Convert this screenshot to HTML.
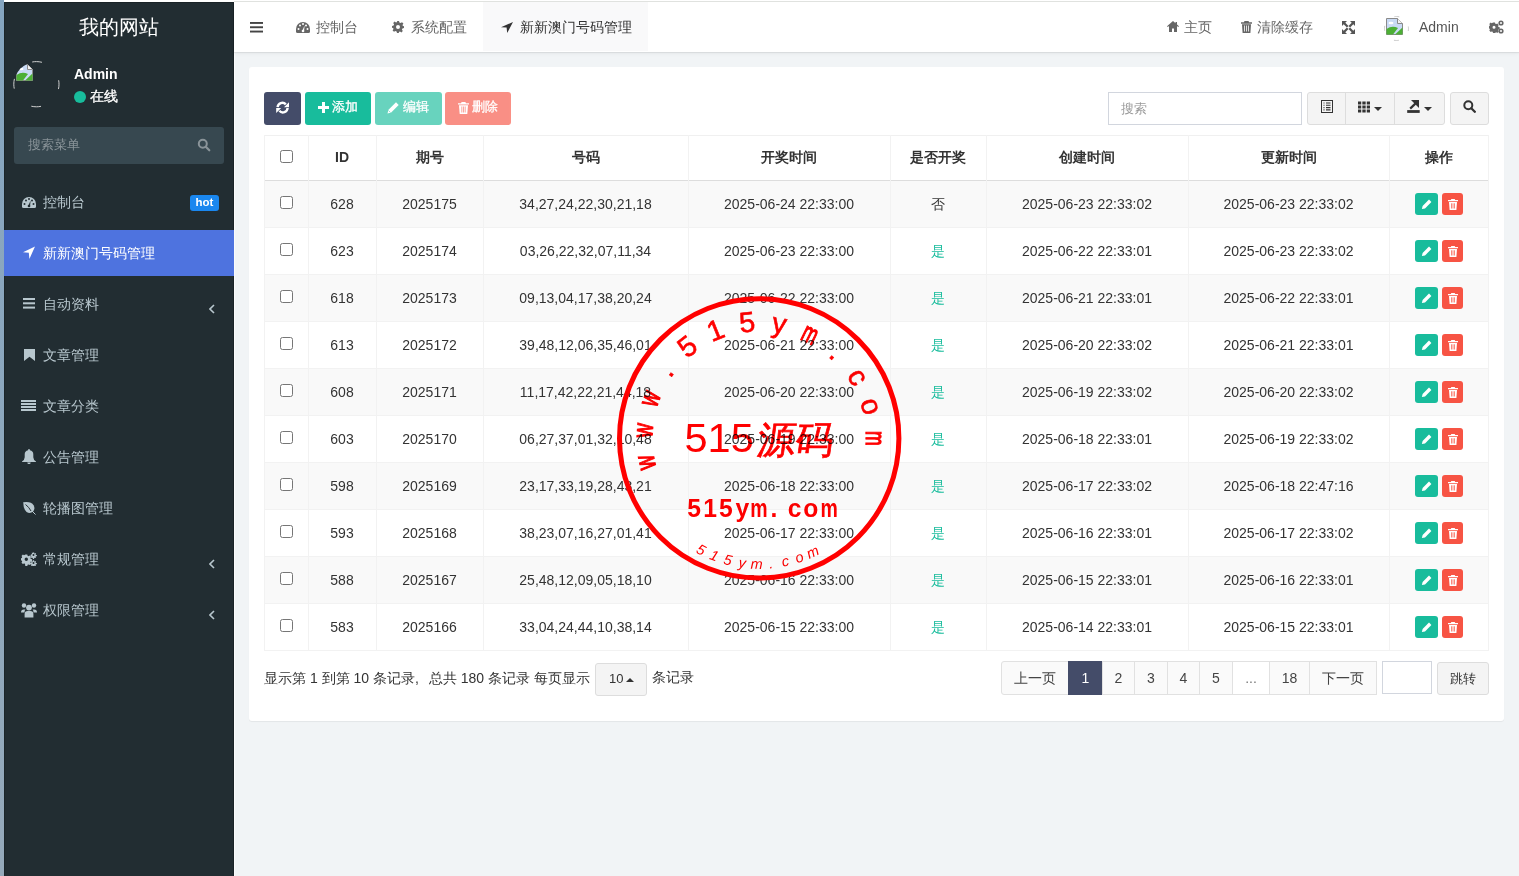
<!DOCTYPE html>
<html><head><meta charset="utf-8">
<style>
*{box-sizing:border-box;margin:0;padding:0}
html,body{width:1519px;height:876px;overflow:hidden;background:#f1f4f6;font-family:"Liberation Sans",sans-serif;font-size:14px;color:#333}
.abs{position:absolute}
#strip{position:absolute;left:0;top:0;width:4px;height:876px;background:linear-gradient(#85a5c0,#95a9ba)}
#topline{position:absolute;left:4px;top:0;width:1515px;height:2px;background:#fff}
#side{position:absolute;left:4px;top:2px;width:230px;height:874px;background:#222d32;color:#b8c7ce}
#logo{position:absolute;left:0;top:0;width:230px;height:50px;line-height:50px;text-align:center;color:#fff;font-size:20px}
.mi{position:absolute;left:0;width:230px;height:46px;line-height:46px;font-size:14px;color:#b8c7ce}
.mi .ic{position:absolute;left:18px;top:16px;width:14px;height:14px}
.mi .tx{position:absolute;left:39px;top:0}
.mi.active{background:#4e73df;color:#fff}
.mi .arr{position:absolute;left:204px;top:19px;width:8px;height:10px}
#hdr{position:absolute;left:234px;top:2px;width:1285px;height:50px;background:#fff;box-shadow:0 1px 1px rgba(0,0,0,.07),0 2px 4px rgba(0,0,0,.04)}
#panel{position:absolute;left:249px;top:67px;width:1255px;height:654px;background:#fff;border-radius:3px;box-shadow:0 1px 1px rgba(0,0,0,.06)}
.cell{height:20px;line-height:20px;text-align:center;font-size:14px;color:#333;white-space:nowrap}
.cbx{width:13px;height:13px;border:1px solid #767676;border-radius:2.5px;background:#fff}
.btn-xs{height:22px;border-radius:3px}
.tb{position:absolute;top:25px;height:33px;border-radius:3px;color:#fff;font-size:13px;line-height:30px;-webkit-text-stroke:.3px #fff}
.pg{position:absolute;top:594px;height:34px;border:1px solid #e1e1e1;background:#fafafa;color:#444;font-size:14px;line-height:32px;text-align:center}
</style></head>
<body>
<div id="strip"></div>
<div id="topline"></div>
<div class="abs" style="left:234px;top:52px;width:1px;height:824px;background:#fafbfc"></div>
<div id="side">
  <div id="logo">我的网站</div>
  <div class="abs" style="left:0;top:0;width:1px;height:874px;background:#1b2529"></div><div class="abs" style="left:229px;top:0;width:1px;height:874px;background:#1a2327"></div><div class="abs" style="left:0;top:0;width:230px;height:1px;background:#1a2327"></div>
  <!-- user panel -->
  <svg class="abs" style="left:9px;top:59px" width="47" height="47" viewBox="0 0 47 47"><circle cx="23.4" cy="23.2" r="22.6" fill="none" stroke="#d0d0d0" stroke-width="1" stroke-dasharray="10 25.5" stroke-dashoffset="5"/></svg>
  <div class="abs" style="left:10px;top:60px;width:45px;height:45px;border-radius:50%;overflow:hidden"><svg style="position:absolute;left:2px;top:2px" width="17" height="17" viewBox="0 0 17 17"><path d="M.5 .5h11l5 5v11H.5z" fill="#c9daf5" stroke="#8a8a8a" stroke-width="1"/><path d="M.5 16.5V11Q6 7 12 10L7 16.5z" fill="#4caf35"/><path d="M9 16.5L16.5 9.5v7z" fill="#4caf35"/><path d="M11.5 .5v5h5" fill="#f2f2f2" stroke="#8a8a8a" stroke-width="1"/><ellipse cx="5" cy="5" rx="2.5" ry="1.3" fill="#fff"/></svg></div>
  <div class="abs" style="left:70px;top:63px;color:#fff;font-weight:bold;font-size:14px;line-height:18px">Admin</div>
  <div class="abs" style="left:70px;top:89px;width:12px;height:12px;border-radius:50%;background:#18bc9c"></div>
  <div class="abs" style="left:86px;top:85px;color:#fff;font-size:14px;line-height:18px;-webkit-text-stroke:.3px #fff">在线</div>
  <!-- search -->
  <div class="abs" style="left:10px;top:125px;width:210px;height:37px;background:#374850;border-radius:3px"></div>
  <div class="abs" style="left:24px;top:134px;color:#8a9499;font-size:13px;line-height:18px">搜索菜单</div>
  <svg class="abs" style="left:193px;top:136px" width="14" height="14" viewBox="0 0 14 14"><circle cx="5.8" cy="5.8" r="4" fill="none" stroke="#8a9499" stroke-width="2"/><path d="M8.8 8.8l3.5 3.5" stroke="#8a9499" stroke-width="2.2" stroke-linecap="round"/></svg>
  <!-- menu -->
  <div class="mi" style="top:177px"><svg class="abs" style="left:18px;top:18px" width="14" height="11" viewBox="0 0 14 11"><path d="M7 0A7 7 0 0 0 0 7v2.5q0 1.5 1.5 1.5h11q1.5 0 1.5-1.5V7A7 7 0 0 0 7 0z" fill="#b8c7ce"/><circle cx="2.5" cy="7" r="1" fill="#222d32"/><circle cx="4" cy="3.5" r="1" fill="#222d32"/><circle cx="7" cy="2" r="1" fill="#222d32"/><circle cx="11.5" cy="7" r="1" fill="#222d32"/><circle cx="10" cy="3.5" r="1" fill="#222d32"/><path d="M6 9.5L8.6 3.5L8 9.5z" fill="#222d32"/><circle cx="7" cy="9" r="1.3" fill="#222d32"/></svg><span class="tx">控制台</span>
    <div class="abs" style="left:186px;top:16px;width:29px;height:16px;background:#1a87ef;border-radius:3px;color:#fff;font-weight:bold;font-size:11.5px;line-height:14px;text-align:center">hot</div></div>
  <div class="mi active" style="top:228px"><svg class="abs" style="left:19px;top:16px" width="12" height="13" viewBox="0 0 12 13"><path d="M12 0.5L0 6.3l5.8.5L6.4 13z" fill="#fff"/></svg><span class="tx">新新澳门号码管理</span></div>
  <div class="mi" style="top:279px"><svg class="abs" style="left:19px;top:17px" width="12" height="11" viewBox="0 0 12 11"><rect y="0" width="12" height="2" fill="#b8c7ce"/><rect y="4.3" width="12" height="2" fill="#b8c7ce"/><rect y="8.6" width="12" height="2" fill="#b8c7ce"/></svg><svg class="abs" style="left:205px;top:23px" width="6" height="10" viewBox="0 0 6 10"><path d="M5 1L1 5l4 4" fill="none" stroke="#b8c7ce" stroke-width="1.6"/></svg><span class="tx">自动资料</span></div>
  <div class="mi" style="top:330px"><svg class="abs" style="left:20px;top:17px" width="11" height="12" viewBox="0 0 11 12"><path d="M0 0h11v12L5.5 7.8 0 12z" fill="#b8c7ce"/></svg><span class="tx">文章管理</span></div>
  <div class="mi" style="top:381px"><svg class="abs" style="left:17px;top:17px" width="15" height="11" viewBox="0 0 15 11"><rect y="0" width="15" height="2" fill="#b8c7ce"/><rect y="3" width="15" height="2" fill="#b8c7ce"/><rect y="6" width="15" height="2" fill="#b8c7ce"/><rect y="9" width="15" height="2" fill="#b8c7ce"/></svg><span class="tx">文章分类</span></div>
  <div class="mi" style="top:432px"><svg class="abs" style="left:18px;top:15px" width="14" height="15" viewBox="0 0 14 15"><path d="M7 0q.9 0 .9.9v.4A4.2 4.2 0 0 1 11.3 5.5v2.8q0 2.4 2.7 4.3v.5H0v-.5q2.7-1.9 2.7-4.3V5.5A4.2 4.2 0 0 1 6.1 1.3V.9Q6.1 0 7 0z" fill="#b8c7ce"/><path d="M5.3 13.4h3.4a1.7 1.7 0 0 1-3.4 0z" fill="#b8c7ce"/></svg><span class="tx">公告管理</span></div>
  <div class="mi" style="top:483px"><svg class="abs" style="left:18px;top:16px" width="14" height="14" viewBox="0 0 14 14"><path d="M1.2 1.2Q9 0 11.6 4.2q1.8 3.2-.4 6.3Q8 13.2 4.6 11 1.5 8.6 1.2 1.2z" fill="#b8c7ce"/><path d="M2.5 2.5L13.5 13.5" stroke="#b8c7ce" stroke-width="1"/><path d="M3.5 3.5Q7 6 9 10" stroke="#222d32" stroke-width="1" fill="none"/></svg><span class="tx">轮播图管理</span></div>
  <div class="mi" style="top:534px"><svg class="abs" style="left:17px;top:16px" width="16" height="14" viewBox="0 0 16 14"><g fill="#b8c7ce"><path fill-rule="evenodd" d="M4.3 2.5h2l.3 1.3 1 .4 1.1-.7 1.4 1.4-.7 1.1.4 1 1.3.3v2l-1.3.3-.4 1 .7 1.1-1.4 1.4-1.1-.7-1 .4-.3 1.3h-2L4 11.8l-1-.4-1.1.7L.5 10.7l.7-1.1-.4-1L-.5 8.3v-2l1.3-.3.4-1-.7-1.1L1.9 2.5l1.1.7 1-.4zM5.3 5.6a1.7 1.7 0 1 0 0 3.4 1.7 1.7 0 1 0 0-3.4z"/><path fill-rule="evenodd" d="M12.5.2l.6.1.1.9.6.3.8-.4.4.4-.4.8.3.6.9.1.1.6-.1.6-.9.1-.3.6.4.8-.4.4-.8-.4-.6.3-.1.9-.6.1-.6-.1-.1-.9-.6-.3-.8.4-.4-.4.4-.8-.3-.6-.9-.1L9.8 3l.1-.6.9-.1.3-.6-.4-.8.4-.4.8.4.6-.3.1-.9zM12.5 2a1 1 0 1 0 0 2 1 1 0 1 0 0-2z"/><path fill-rule="evenodd" d="M12.5 8.2l.6.1.1.9.6.3.8-.4.4.4-.4.8.3.6.9.1.1.6-.1.6-.9.1-.3.6.4.8-.4.4-.8-.4-.6.3-.1.9-.6.1-.6-.1-.1-.9-.6-.3-.8.4-.4-.4.4-.8-.3-.6-.9-.1-.1-.6.1-.6.9-.1.3-.6-.4-.8.4-.4.8.4.6-.3.1-.9zM12.5 10a1 1 0 1 0 0 2 1 1 0 1 0 0-2z"/></g></svg><svg class="abs" style="left:205px;top:23px" width="6" height="10" viewBox="0 0 6 10"><path d="M5 1L1 5l4 4" fill="none" stroke="#b8c7ce" stroke-width="1.6"/></svg><span class="tx">常规管理</span></div>
  <div class="mi" style="top:585px"><svg class="abs" style="left:17px;top:16px" width="16" height="15" viewBox="0 0 16 15"><g fill="#b8c7ce"><circle cx="3" cy="2.5" r="2.2"/><circle cx="13" cy="2.5" r="2.2"/><circle cx="8" cy="4.6" r="2.9"/><path d="M0 9.5q0-3 2.8-3h1.6q-.9 1.2-.9 3H0z"/><path d="M16 9.5q0-3-2.8-3h-1.6q.9 1.2.9 3H16z"/><path d="M3.6 14.5V11q0-3 3-3h2.8q3 0 3 3v3.5z"/></g></svg><svg class="abs" style="left:205px;top:23px" width="6" height="10" viewBox="0 0 6 10"><path d="M5 1L1 5l4 4" fill="none" stroke="#b8c7ce" stroke-width="1.6"/></svg><span class="tx">权限管理</span></div>
</div>
<div id="hdr">
  <div class="abs" style="left:0;top:-1px;width:1285px;height:1px;background:#e0e2df"></div>
  <svg class="abs" style="left:16px;top:20px" width="13" height="11" viewBox="0 0 13 11"><rect x="0" y="0" width="13" height="1.9" fill="#444"/><rect x="0" y="4.3" width="13" height="1.9" fill="#444"/><rect x="0" y="8.6" width="13" height="1.9" fill="#444"/></svg>
  <!-- tab dashboard -->
  <svg class="abs" style="left:62px;top:20px" width="14" height="11" viewBox="0 0 14 11"><path d="M7 0A7 7 0 0 0 0 7v2.5q0 1.5 1.5 1.5h11q1.5 0 1.5-1.5V7A7 7 0 0 0 7 0z" fill="#666"/><circle cx="2.5" cy="7" r="1" fill="#fff"/><circle cx="4" cy="3.5" r="1" fill="#fff"/><circle cx="7" cy="2" r="1" fill="#fff"/><circle cx="11.5" cy="7" r="1" fill="#fff"/><circle cx="10" cy="3.5" r="1" fill="#fff"/><path d="M6 9.5L8.6 3.5L8 9.5z" fill="#fff"/><circle cx="7" cy="9" r="1.3" fill="#fff"/></svg>
  <div class="abs" style="left:82px;top:17px;color:#666;font-size:14px;line-height:16px">控制台</div>
  <svg class="abs" style="left:158px;top:19px" width="12" height="12" viewBox="0 0 12 12"><path fill="#666" fill-rule="evenodd" d="M5 0h2l.4 1.6 1.2.5 1.4-.9 1.4 1.4-.9 1.4.5 1.2L12 5v2l-1.6.4-.5 1.2.9 1.4-1.4 1.4-1.4-.9-1.2.5L7 12H5l-.4-1.6-1.2-.5-1.4.9-1.4-1.4.9-1.4-.5-1.2L0 7V5l1.6-.4.5-1.2-.9-1.4 1.4-1.4 1.4.9 1.2-.5zM6 4a2 2 0 1 0 0 4a2 2 0 1 0 0-4z"/></svg>
  <div class="abs" style="left:177px;top:17px;color:#666;font-size:14px;line-height:16px">系统配置</div>
  <div class="abs" style="left:249px;top:0;width:165px;height:49px;background:#f9f9fa"></div>
  <svg class="abs" style="left:267px;top:20px" width="12" height="11" viewBox="0 0 12 11"><path d="M12 0L0 5.2l5.6.4L6.2 11z" fill="#333"/></svg>
  <div class="abs" style="left:286px;top:17px;color:#333;font-size:14px;line-height:16px">新新澳门号码管理</div>
  <!-- right -->
  <svg class="abs" style="left:933px;top:19px" width="12" height="11" viewBox="0 0 12 11"><path d="M6 0L0 5.3l.8.8L2 5v6h3V7.5h2V11h3V5l1.2 1.1.8-.8L10 3.5V1H8.5v1.2z" fill="#666"/></svg>
  <div class="abs" style="left:950px;top:17px;color:#666;font-size:14px;line-height:16px">主页</div>
  <svg class="abs" style="left:1007px;top:19px" width="11" height="12" viewBox="0 0 11 12"><path d="M3.5 0h4l.6 1.3H11v1.4H0V1.3h2.9zM1 3.3h9l-.6 8.7H1.6z" fill="#666"/><path d="M3.5 4.5v6M5.5 4.5v6M7.5 4.5v6" stroke="#fff" stroke-width=".8"/></svg>
  <div class="abs" style="left:1023px;top:17px;color:#666;font-size:14px;line-height:16px">清除缓存</div>
  <svg class="abs" style="left:1108px;top:19px" width="13" height="13" viewBox="0 0 13 13"><path d="M0 0h5L3.3 1.7 6.5 4.9 4.9 6.5 1.7 3.3 0 5zM13 0v5l-1.7-1.7L8.1 6.5 6.5 4.9 9.7 1.7 8 0zM0 13V8l1.7 1.7 3.2-3.2 1.6 1.6-3.2 3.2L5 13zM13 13H8l1.7-1.7-3.2-3.2 1.6-1.6 3.2 3.2L13 8z" fill="#555"/></svg>
  <svg class="abs" style="left:1150px;top:14px" width="26" height="26" viewBox="0 0 26 26"><circle cx="12.5" cy="12.5" r="12" fill="none" stroke="#c8c8c8" stroke-width="1" stroke-dasharray="5 13.85" stroke-dashoffset="2.5"/></svg>
  <svg class="abs" style="left:1152px;top:16px" width="17" height="17" viewBox="0 0 17 17"><path d="M.5 .5h11l5 5v11H.5z" fill="#c9daf5" stroke="#8a8a8a" stroke-width="1"/><path d="M.5 16.5V11Q6 7 12 10L7 16.5z" fill="#4caf35"/><path d="M9 16.5L16.5 9.5v7z" fill="#4caf35"/><path d="M11.5 .5v5h5" fill="#f2f2f2" stroke="#8a8a8a" stroke-width="1"/><ellipse cx="5" cy="5" rx="2.5" ry="1.3" fill="#fff"/></svg>
  <div class="abs" style="left:1185px;top:17px;color:#555;font-size:14px;line-height:16px">Admin</div>
  <svg class="abs" style="left:1255px;top:18px" width="15" height="14" viewBox="0 0 15 14"><path fill="#666" fill-rule="evenodd" d="M4 2.5h2l.3 1.2 1 .4 1-.6 1.4 1.4-.6 1 .4 1 1.2.3v2l-1.2.3-.4 1 .6 1-1.4 1.4-1-.6-1 .4L6 13H4l-.3-1.2-1-.4-1 .6L.3 10.6l.6-1-.4-1L-.7 8.3v-2l1.2-.3.4-1-.6-1L1.7 2.6l1 .6 1-.4zM5 5.8a1.5 1.5 0 1 0 0 3a1.5 1.5 0 1 0 0-3z"/><circle cx="12" cy="3" r="2.6" fill="#666"/><circle cx="12" cy="3" r="1" fill="#fff"/><circle cx="12" cy="11" r="2.6" fill="#666"/><circle cx="12" cy="11" r="1" fill="#fff"/></svg>
</div>
<div id="panel">
<div class="tb" style="left:15px;width:37px;background:#444c69">
 <svg width="14" height="13" viewBox="0 0 14 13" style="position:absolute;left:11.5px;top:9px"><path d="M1.6 6.2A4.7 4.7 0 0 1 9.8 3.4" fill="none" stroke="#fff" stroke-width="2.4"/><path d="M13 1.2V6.2H8z" fill="#fff"/><path d="M11.6 7A4.7 4.7 0 0 1 3.4 9.8" fill="none" stroke="#fff" stroke-width="2.4"/><path d="M.2 12V7h5z" fill="#fff"/></svg>
</div>
<div class="tb" style="left:56px;width:66px;background:#18bc9c">
 <svg width="11" height="11" viewBox="0 0 11 11" style="position:absolute;left:13px;top:10px"><path d="M4 0h3v4h4v3H7v4H4V7H0V4h4z" fill="#fff"/></svg>
 <span style="position:absolute;left:27px;top:0">添加</span>
</div>
<div class="tb" style="left:126px;width:67px;background:#18bc9c;opacity:.65">
 <svg width="12" height="12" viewBox="0 0 12 12" style="position:absolute;left:12px;top:10px"><path d="M9 .3L11.7 3 4.2 10.5 .5 11.5 1.5 7.8z" fill="#fff"/><path d="M1.6 8.6l1.8 1.8" stroke="#18bc9c" stroke-width=".7"/></svg>
 <span style="position:absolute;left:28px;top:0">编辑</span>
</div>
<div class="tb" style="left:196px;width:66px;background:#f75444;opacity:.65">
 <svg width="11" height="12" viewBox="0 0 11 12" style="position:absolute;left:13px;top:10px"><path d="M3.6 0h3.8l.6 1.2H11v1.4H0V1.2h3z" fill="#fff"/><path d="M1 3.2h9l-.7 8.8H1.7z" fill="#fff"/><path d="M3.8 4.5v6M5.5 4.5v6M7.2 4.5v6" stroke="#f75444" stroke-width=".8"/></svg>
 <span style="position:absolute;left:27px;top:0">删除</span>
</div>
<!-- right toolbar -->
<div class="abs" style="left:859px;top:25px;width:194px;height:33px;border:1px solid #d2d6de;background:#fff;color:#999;font-size:13px;line-height:31px;padding-left:12px">搜索</div>
<div class="abs" style="left:1058px;top:25px;width:138px;height:33px;border:1px solid #ddd;border-radius:3px;background:#f4f4f4"></div>
<div class="abs" style="left:1096px;top:25px;width:1px;height:33px;background:#ddd"></div>
<div class="abs" style="left:1145px;top:25px;width:1px;height:33px;background:#ddd"></div>
<svg class="abs" style="left:1072px;top:33px" width="12" height="13" viewBox="0 0 12 13"><rect x=".5" y=".5" width="11" height="12" fill="none" stroke="#333" stroke-width="1"/><path d="M2.5 3h1M5 3h4.5M2.5 5.3h1M5 5.3h4.5M2.5 7.6h1M5 7.6h4.5M2.5 9.9h1M5 9.9h4.5" stroke="#333" stroke-width="1.1"/></svg>
<svg class="abs" style="left:1109px;top:34px" width="12" height="12" viewBox="0 0 13 12"><path d="M0 0h3.5v3.3H0zM4.7 0h3.6v3.3H4.7zM9.5 0H13v3.3H9.5zM0 4.3h3.5v3.4H0zM4.7 4.3h3.6v3.4H4.7zM9.5 4.3H13v3.4H9.5zM0 8.7h3.5V12H0zM4.7 8.7h3.6V12H4.7zM9.5 8.7H13V12H9.5z" fill="#333"/></svg>
<svg class="abs" style="left:1125px;top:40px" width="8" height="4" viewBox="0 0 8 4"><path d="M0 0h8L4 4z" fill="#333"/></svg>
<svg class="abs" style="left:1158px;top:33px" width="14" height="14" viewBox="0 0 14 14"><path d="M4 0H12V8z" fill="#333"/><path d="M8.6 3.4L3.2 8.6" stroke="#333" stroke-width="2.2"/><rect x=".2" y="10.1" width="12.5" height="2.8" fill="#333"/></svg>
<svg class="abs" style="left:1175px;top:40px" width="8" height="4" viewBox="0 0 8 4"><path d="M0 0h8L4 4z" fill="#333"/></svg>
<div class="abs" style="left:1201px;top:25px;width:39px;height:33px;border:1px solid #ddd;border-radius:3px;background:#f4f4f4"></div>
<svg class="abs" style="left:1214px;top:33px" width="13" height="13" viewBox="0 0 13 13"><circle cx="5.3" cy="5.3" r="4" fill="none" stroke="#333" stroke-width="2"/><path d="M8.3 8.3l3.5 3.5" stroke="#333" stroke-width="2.3" stroke-linecap="round"/></svg>

<div class="abs" style="left:15px;top:114px;width:1225px;height:46px;background:#f9f9f9"></div>
<div class="abs" style="left:15px;top:208px;width:1225px;height:46px;background:#f9f9f9"></div>
<div class="abs" style="left:15px;top:302px;width:1225px;height:46px;background:#f9f9f9"></div>
<div class="abs" style="left:15px;top:396px;width:1225px;height:46px;background:#f9f9f9"></div>
<div class="abs" style="left:15px;top:490px;width:1225px;height:46px;background:#f9f9f9"></div>
<div class="abs" style="left:15px;top:68px;width:1225px;height:1px;background:#f0f0f0"></div>
<div class="abs" style="left:15px;top:113px;width:1225px;height:1px;background:#dddddd"></div>
<div class="abs" style="left:15px;top:160px;width:1225px;height:1px;background:#f2f2f2"></div>
<div class="abs" style="left:15px;top:207px;width:1225px;height:1px;background:#f2f2f2"></div>
<div class="abs" style="left:15px;top:254px;width:1225px;height:1px;background:#f2f2f2"></div>
<div class="abs" style="left:15px;top:301px;width:1225px;height:1px;background:#f2f2f2"></div>
<div class="abs" style="left:15px;top:348px;width:1225px;height:1px;background:#f2f2f2"></div>
<div class="abs" style="left:15px;top:395px;width:1225px;height:1px;background:#f2f2f2"></div>
<div class="abs" style="left:15px;top:442px;width:1225px;height:1px;background:#f2f2f2"></div>
<div class="abs" style="left:15px;top:489px;width:1225px;height:1px;background:#f2f2f2"></div>
<div class="abs" style="left:15px;top:536px;width:1225px;height:1px;background:#f2f2f2"></div>
<div class="abs" style="left:15px;top:583px;width:1225px;height:1px;background:#f2f2f2"></div>
<div class="abs" style="left:15px;top:68px;width:1px;height:516px;background:#f2f2f2"></div>
<div class="abs" style="left:59px;top:68px;width:1px;height:516px;background:#f2f2f2"></div>
<div class="abs" style="left:127px;top:68px;width:1px;height:516px;background:#f2f2f2"></div>
<div class="abs" style="left:234px;top:68px;width:1px;height:516px;background:#f2f2f2"></div>
<div class="abs" style="left:439px;top:68px;width:1px;height:516px;background:#f2f2f2"></div>
<div class="abs" style="left:641px;top:68px;width:1px;height:516px;background:#f2f2f2"></div>
<div class="abs" style="left:737px;top:68px;width:1px;height:516px;background:#f2f2f2"></div>
<div class="abs" style="left:939px;top:68px;width:1px;height:516px;background:#f2f2f2"></div>
<div class="abs" style="left:1140px;top:68px;width:1px;height:516px;background:#f2f2f2"></div>
<div class="abs" style="left:1239px;top:68px;width:1px;height:516px;background:#f2f2f2"></div>
<div class="abs cell" style="left:59px;top:80px;width:68px;font-weight:bold">ID</div>
<div class="abs cell" style="left:127px;top:80px;width:107px;font-weight:bold">期号</div>
<div class="abs cell" style="left:234px;top:80px;width:205px;font-weight:bold">号码</div>
<div class="abs cell" style="left:439px;top:80px;width:202px;font-weight:bold">开奖时间</div>
<div class="abs cell" style="left:641px;top:80px;width:96px;font-weight:bold">是否开奖</div>
<div class="abs cell" style="left:737px;top:80px;width:202px;font-weight:bold">创建时间</div>
<div class="abs cell" style="left:939px;top:80px;width:201px;font-weight:bold">更新时间</div>
<div class="abs cell" style="left:1140px;top:80px;width:99px;font-weight:bold">操作</div>
<div class="abs cbx" style="left:31px;top:83px"></div>
<div class="abs cbx" style="left:31px;top:129px"></div>
<div class="abs cell" style="left:59px;top:127px;width:68px;">628</div>
<div class="abs cell" style="left:127px;top:127px;width:107px;">2025175</div>
<div class="abs cell" style="left:234px;top:127px;width:205px;">34,27,24,22,30,21,18</div>
<div class="abs cell" style="left:439px;top:127px;width:202px;">2025-06-24 22:33:00</div>
<div class="abs cell" style="left:641px;top:127px;width:96px;">否</div>
<div class="abs cell" style="left:737px;top:127px;width:202px;">2025-06-23 22:33:02</div>
<div class="abs cell" style="left:939px;top:127px;width:201px;">2025-06-23 22:33:02</div>
<div class="abs btn-xs" style="left:1166px;top:126px;width:23px;background:#18bc9c"><svg width="11" height="11" viewBox="0 0 11 11" style="position:absolute;left:6px;top:6px"><path d="M8 0.6L10.4 3 4 9.4 0.9 10.1 1.6 7z" fill="#fff"/></svg></div>
<div class="abs btn-xs" style="left:1193px;top:126px;width:21px;background:#f75444"><svg width="10" height="11" viewBox="0 0 10 11" style="position:absolute;left:5.5px;top:5.5px"><path d="M3.3 0h3.4l.5 1H10v1.3H0V1h2.8zM1 3h8l-.6 8H1.6z" fill="#fff"/><path d="M3.5 4.3v5.2M5 4.3v5.2M6.5 4.3v5.2" stroke="#f75444" stroke-width=".7"/></svg></div>
<div class="abs cbx" style="left:31px;top:176px"></div>
<div class="abs cell" style="left:59px;top:174px;width:68px;">623</div>
<div class="abs cell" style="left:127px;top:174px;width:107px;">2025174</div>
<div class="abs cell" style="left:234px;top:174px;width:205px;">03,26,22,32,07,11,34</div>
<div class="abs cell" style="left:439px;top:174px;width:202px;">2025-06-23 22:33:00</div>
<div class="abs cell" style="left:641px;top:174px;width:96px;color:#18bc9c">是</div>
<div class="abs cell" style="left:737px;top:174px;width:202px;">2025-06-22 22:33:01</div>
<div class="abs cell" style="left:939px;top:174px;width:201px;">2025-06-23 22:33:02</div>
<div class="abs btn-xs" style="left:1166px;top:173px;width:23px;background:#18bc9c"><svg width="11" height="11" viewBox="0 0 11 11" style="position:absolute;left:6px;top:6px"><path d="M8 0.6L10.4 3 4 9.4 0.9 10.1 1.6 7z" fill="#fff"/></svg></div>
<div class="abs btn-xs" style="left:1193px;top:173px;width:21px;background:#f75444"><svg width="10" height="11" viewBox="0 0 10 11" style="position:absolute;left:5.5px;top:5.5px"><path d="M3.3 0h3.4l.5 1H10v1.3H0V1h2.8zM1 3h8l-.6 8H1.6z" fill="#fff"/><path d="M3.5 4.3v5.2M5 4.3v5.2M6.5 4.3v5.2" stroke="#f75444" stroke-width=".7"/></svg></div>
<div class="abs cbx" style="left:31px;top:223px"></div>
<div class="abs cell" style="left:59px;top:221px;width:68px;">618</div>
<div class="abs cell" style="left:127px;top:221px;width:107px;">2025173</div>
<div class="abs cell" style="left:234px;top:221px;width:205px;">09,13,04,17,38,20,24</div>
<div class="abs cell" style="left:439px;top:221px;width:202px;">2025-06-22 22:33:00</div>
<div class="abs cell" style="left:641px;top:221px;width:96px;color:#18bc9c">是</div>
<div class="abs cell" style="left:737px;top:221px;width:202px;">2025-06-21 22:33:01</div>
<div class="abs cell" style="left:939px;top:221px;width:201px;">2025-06-22 22:33:01</div>
<div class="abs btn-xs" style="left:1166px;top:220px;width:23px;background:#18bc9c"><svg width="11" height="11" viewBox="0 0 11 11" style="position:absolute;left:6px;top:6px"><path d="M8 0.6L10.4 3 4 9.4 0.9 10.1 1.6 7z" fill="#fff"/></svg></div>
<div class="abs btn-xs" style="left:1193px;top:220px;width:21px;background:#f75444"><svg width="10" height="11" viewBox="0 0 10 11" style="position:absolute;left:5.5px;top:5.5px"><path d="M3.3 0h3.4l.5 1H10v1.3H0V1h2.8zM1 3h8l-.6 8H1.6z" fill="#fff"/><path d="M3.5 4.3v5.2M5 4.3v5.2M6.5 4.3v5.2" stroke="#f75444" stroke-width=".7"/></svg></div>
<div class="abs cbx" style="left:31px;top:270px"></div>
<div class="abs cell" style="left:59px;top:268px;width:68px;">613</div>
<div class="abs cell" style="left:127px;top:268px;width:107px;">2025172</div>
<div class="abs cell" style="left:234px;top:268px;width:205px;">39,48,12,06,35,46,01</div>
<div class="abs cell" style="left:439px;top:268px;width:202px;">2025-06-21 22:33:00</div>
<div class="abs cell" style="left:641px;top:268px;width:96px;color:#18bc9c">是</div>
<div class="abs cell" style="left:737px;top:268px;width:202px;">2025-06-20 22:33:02</div>
<div class="abs cell" style="left:939px;top:268px;width:201px;">2025-06-21 22:33:01</div>
<div class="abs btn-xs" style="left:1166px;top:267px;width:23px;background:#18bc9c"><svg width="11" height="11" viewBox="0 0 11 11" style="position:absolute;left:6px;top:6px"><path d="M8 0.6L10.4 3 4 9.4 0.9 10.1 1.6 7z" fill="#fff"/></svg></div>
<div class="abs btn-xs" style="left:1193px;top:267px;width:21px;background:#f75444"><svg width="10" height="11" viewBox="0 0 10 11" style="position:absolute;left:5.5px;top:5.5px"><path d="M3.3 0h3.4l.5 1H10v1.3H0V1h2.8zM1 3h8l-.6 8H1.6z" fill="#fff"/><path d="M3.5 4.3v5.2M5 4.3v5.2M6.5 4.3v5.2" stroke="#f75444" stroke-width=".7"/></svg></div>
<div class="abs cbx" style="left:31px;top:317px"></div>
<div class="abs cell" style="left:59px;top:315px;width:68px;">608</div>
<div class="abs cell" style="left:127px;top:315px;width:107px;">2025171</div>
<div class="abs cell" style="left:234px;top:315px;width:205px;">11,17,42,22,21,44,18</div>
<div class="abs cell" style="left:439px;top:315px;width:202px;">2025-06-20 22:33:00</div>
<div class="abs cell" style="left:641px;top:315px;width:96px;color:#18bc9c">是</div>
<div class="abs cell" style="left:737px;top:315px;width:202px;">2025-06-19 22:33:02</div>
<div class="abs cell" style="left:939px;top:315px;width:201px;">2025-06-20 22:33:02</div>
<div class="abs btn-xs" style="left:1166px;top:314px;width:23px;background:#18bc9c"><svg width="11" height="11" viewBox="0 0 11 11" style="position:absolute;left:6px;top:6px"><path d="M8 0.6L10.4 3 4 9.4 0.9 10.1 1.6 7z" fill="#fff"/></svg></div>
<div class="abs btn-xs" style="left:1193px;top:314px;width:21px;background:#f75444"><svg width="10" height="11" viewBox="0 0 10 11" style="position:absolute;left:5.5px;top:5.5px"><path d="M3.3 0h3.4l.5 1H10v1.3H0V1h2.8zM1 3h8l-.6 8H1.6z" fill="#fff"/><path d="M3.5 4.3v5.2M5 4.3v5.2M6.5 4.3v5.2" stroke="#f75444" stroke-width=".7"/></svg></div>
<div class="abs cbx" style="left:31px;top:364px"></div>
<div class="abs cell" style="left:59px;top:362px;width:68px;">603</div>
<div class="abs cell" style="left:127px;top:362px;width:107px;">2025170</div>
<div class="abs cell" style="left:234px;top:362px;width:205px;">06,27,37,01,32,10,48</div>
<div class="abs cell" style="left:439px;top:362px;width:202px;">2025-06-19 22:33:00</div>
<div class="abs cell" style="left:641px;top:362px;width:96px;color:#18bc9c">是</div>
<div class="abs cell" style="left:737px;top:362px;width:202px;">2025-06-18 22:33:01</div>
<div class="abs cell" style="left:939px;top:362px;width:201px;">2025-06-19 22:33:02</div>
<div class="abs btn-xs" style="left:1166px;top:361px;width:23px;background:#18bc9c"><svg width="11" height="11" viewBox="0 0 11 11" style="position:absolute;left:6px;top:6px"><path d="M8 0.6L10.4 3 4 9.4 0.9 10.1 1.6 7z" fill="#fff"/></svg></div>
<div class="abs btn-xs" style="left:1193px;top:361px;width:21px;background:#f75444"><svg width="10" height="11" viewBox="0 0 10 11" style="position:absolute;left:5.5px;top:5.5px"><path d="M3.3 0h3.4l.5 1H10v1.3H0V1h2.8zM1 3h8l-.6 8H1.6z" fill="#fff"/><path d="M3.5 4.3v5.2M5 4.3v5.2M6.5 4.3v5.2" stroke="#f75444" stroke-width=".7"/></svg></div>
<div class="abs cbx" style="left:31px;top:411px"></div>
<div class="abs cell" style="left:59px;top:409px;width:68px;">598</div>
<div class="abs cell" style="left:127px;top:409px;width:107px;">2025169</div>
<div class="abs cell" style="left:234px;top:409px;width:205px;">23,17,33,19,28,43,21</div>
<div class="abs cell" style="left:439px;top:409px;width:202px;">2025-06-18 22:33:00</div>
<div class="abs cell" style="left:641px;top:409px;width:96px;color:#18bc9c">是</div>
<div class="abs cell" style="left:737px;top:409px;width:202px;">2025-06-17 22:33:02</div>
<div class="abs cell" style="left:939px;top:409px;width:201px;">2025-06-18 22:47:16</div>
<div class="abs btn-xs" style="left:1166px;top:408px;width:23px;background:#18bc9c"><svg width="11" height="11" viewBox="0 0 11 11" style="position:absolute;left:6px;top:6px"><path d="M8 0.6L10.4 3 4 9.4 0.9 10.1 1.6 7z" fill="#fff"/></svg></div>
<div class="abs btn-xs" style="left:1193px;top:408px;width:21px;background:#f75444"><svg width="10" height="11" viewBox="0 0 10 11" style="position:absolute;left:5.5px;top:5.5px"><path d="M3.3 0h3.4l.5 1H10v1.3H0V1h2.8zM1 3h8l-.6 8H1.6z" fill="#fff"/><path d="M3.5 4.3v5.2M5 4.3v5.2M6.5 4.3v5.2" stroke="#f75444" stroke-width=".7"/></svg></div>
<div class="abs cbx" style="left:31px;top:458px"></div>
<div class="abs cell" style="left:59px;top:456px;width:68px;">593</div>
<div class="abs cell" style="left:127px;top:456px;width:107px;">2025168</div>
<div class="abs cell" style="left:234px;top:456px;width:205px;">38,23,07,16,27,01,41</div>
<div class="abs cell" style="left:439px;top:456px;width:202px;">2025-06-17 22:33:00</div>
<div class="abs cell" style="left:641px;top:456px;width:96px;color:#18bc9c">是</div>
<div class="abs cell" style="left:737px;top:456px;width:202px;">2025-06-16 22:33:01</div>
<div class="abs cell" style="left:939px;top:456px;width:201px;">2025-06-17 22:33:02</div>
<div class="abs btn-xs" style="left:1166px;top:455px;width:23px;background:#18bc9c"><svg width="11" height="11" viewBox="0 0 11 11" style="position:absolute;left:6px;top:6px"><path d="M8 0.6L10.4 3 4 9.4 0.9 10.1 1.6 7z" fill="#fff"/></svg></div>
<div class="abs btn-xs" style="left:1193px;top:455px;width:21px;background:#f75444"><svg width="10" height="11" viewBox="0 0 10 11" style="position:absolute;left:5.5px;top:5.5px"><path d="M3.3 0h3.4l.5 1H10v1.3H0V1h2.8zM1 3h8l-.6 8H1.6z" fill="#fff"/><path d="M3.5 4.3v5.2M5 4.3v5.2M6.5 4.3v5.2" stroke="#f75444" stroke-width=".7"/></svg></div>
<div class="abs cbx" style="left:31px;top:505px"></div>
<div class="abs cell" style="left:59px;top:503px;width:68px;">588</div>
<div class="abs cell" style="left:127px;top:503px;width:107px;">2025167</div>
<div class="abs cell" style="left:234px;top:503px;width:205px;">25,48,12,09,05,18,10</div>
<div class="abs cell" style="left:439px;top:503px;width:202px;">2025-06-16 22:33:00</div>
<div class="abs cell" style="left:641px;top:503px;width:96px;color:#18bc9c">是</div>
<div class="abs cell" style="left:737px;top:503px;width:202px;">2025-06-15 22:33:01</div>
<div class="abs cell" style="left:939px;top:503px;width:201px;">2025-06-16 22:33:01</div>
<div class="abs btn-xs" style="left:1166px;top:502px;width:23px;background:#18bc9c"><svg width="11" height="11" viewBox="0 0 11 11" style="position:absolute;left:6px;top:6px"><path d="M8 0.6L10.4 3 4 9.4 0.9 10.1 1.6 7z" fill="#fff"/></svg></div>
<div class="abs btn-xs" style="left:1193px;top:502px;width:21px;background:#f75444"><svg width="10" height="11" viewBox="0 0 10 11" style="position:absolute;left:5.5px;top:5.5px"><path d="M3.3 0h3.4l.5 1H10v1.3H0V1h2.8zM1 3h8l-.6 8H1.6z" fill="#fff"/><path d="M3.5 4.3v5.2M5 4.3v5.2M6.5 4.3v5.2" stroke="#f75444" stroke-width=".7"/></svg></div>
<div class="abs cbx" style="left:31px;top:552px"></div>
<div class="abs cell" style="left:59px;top:550px;width:68px;">583</div>
<div class="abs cell" style="left:127px;top:550px;width:107px;">2025166</div>
<div class="abs cell" style="left:234px;top:550px;width:205px;">33,04,24,44,10,38,14</div>
<div class="abs cell" style="left:439px;top:550px;width:202px;">2025-06-15 22:33:00</div>
<div class="abs cell" style="left:641px;top:550px;width:96px;color:#18bc9c">是</div>
<div class="abs cell" style="left:737px;top:550px;width:202px;">2025-06-14 22:33:01</div>
<div class="abs cell" style="left:939px;top:550px;width:201px;">2025-06-15 22:33:01</div>
<div class="abs btn-xs" style="left:1166px;top:549px;width:23px;background:#18bc9c"><svg width="11" height="11" viewBox="0 0 11 11" style="position:absolute;left:6px;top:6px"><path d="M8 0.6L10.4 3 4 9.4 0.9 10.1 1.6 7z" fill="#fff"/></svg></div>
<div class="abs btn-xs" style="left:1193px;top:549px;width:21px;background:#f75444"><svg width="10" height="11" viewBox="0 0 10 11" style="position:absolute;left:5.5px;top:5.5px"><path d="M3.3 0h3.4l.5 1H10v1.3H0V1h2.8zM1 3h8l-.6 8H1.6z" fill="#fff"/><path d="M3.5 4.3v5.2M5 4.3v5.2M6.5 4.3v5.2" stroke="#f75444" stroke-width=".7"/></svg></div>
<div class="abs" style="left:15px;top:601px;height:20px;line-height:20px;font-size:14px;color:#333;white-space:nowrap">显示第 1 到第 10 条记录,<span style="display:inline-block;width:10px"></span>总共 180 条记录 每页显示</div>
<div class="abs" style="left:346px;top:596px;width:52px;height:33px;border:1px solid #ddd;border-radius:3px;background:#f4f4f4;font-size:13px;color:#333;line-height:30px;padding-left:13px">10</div>
<svg class="abs" style="left:377px;top:611px" width="8" height="4" viewBox="0 0 8 4"><path d="M0 4h8L4 0z" fill="#333"/></svg>
<div class="abs" style="left:403px;top:600px;height:20px;line-height:20px;font-size:14px;color:#333;white-space:nowrap">条记录</div>
<div class="pg" style="left:752px;width:68px;border-radius:3px 0 0 3px">上一页</div>
<div class="pg" style="left:819px;width:35px;background:#444c69;border-color:#444c69;color:#fff">1</div>
<div class="pg" style="left:853px;width:33px;">2</div>
<div class="pg" style="left:885px;width:34px;">3</div>
<div class="pg" style="left:918px;width:33px;">4</div>
<div class="pg" style="left:950px;width:34px;">5</div>
<div class="pg" style="left:983px;width:38px;background:#fff;color:#777">...</div>
<div class="pg" style="left:1020px;width:41px;">18</div>
<div class="pg" style="left:1060px;width:68px;">下一页</div>
<div class="abs" style="left:1133px;top:594px;width:50px;height:33px;border:1px solid #d2d6de;background:#fff"></div>
<div class="abs" style="left:1188px;top:595px;width:52px;height:33px;border:1px solid #ddd;border-radius:3px;background:#f4f4f4;font-size:13px;color:#333;line-height:31px;text-align:center">跳转</div>

</div>
<svg class="abs" style="left:0;top:0;pointer-events:none" width="1519" height="876" viewBox="0 0 1519 876">
<circle cx="759.2" cy="438.4" r="139.7" fill="none" stroke="#ff0000" stroke-width="5"/>
</svg>
<svg class="abs" style="left:0;top:0;pointer-events:none;mix-blend-mode:multiply" width="1519" height="876" viewBox="0 0 1519 876">
<text transform="translate(654.54,460.65) rotate(-102) scale(0.68,1)" text-anchor="middle" font-family="Liberation Sans" font-size="28.5" fill="#ff0000" stroke="#ff0000" stroke-width="1.3">w</text>
<text transform="translate(652.46,430.94) rotate(-86) scale(0.68,1)" text-anchor="middle" font-family="Liberation Sans" font-size="28.5" fill="#ff0000" stroke="#ff0000" stroke-width="1.3">w</text>
<text transform="translate(658.65,401.80) rotate(-70) scale(0.68,1)" text-anchor="middle" font-family="Liberation Sans" font-size="28.5" fill="#ff0000" stroke="#ff0000" stroke-width="1.3">w</text>
<text transform="translate(672.64,375.51) rotate(-54) scale(1.0,1)" text-anchor="middle" font-family="Liberation Sans" font-size="28.5" fill="#ff0000" stroke="#ff0000" stroke-width="0.6">.</text>
<text transform="translate(693.32,354.08) rotate(-38) scale(1.0,1)" text-anchor="middle" font-family="Liberation Sans" font-size="28.5" fill="#ff0000" stroke="#ff0000" stroke-width="0.6">5</text>
<text transform="translate(719.12,339.19) rotate(-22) scale(1.0,1)" text-anchor="middle" font-family="Liberation Sans" font-size="28.5" fill="#ff0000" stroke="#ff0000" stroke-width="0.6">1</text>
<text transform="translate(748.02,331.99) rotate(-6) scale(1.0,1)" text-anchor="middle" font-family="Liberation Sans" font-size="28.5" fill="#ff0000" stroke="#ff0000" stroke-width="0.6">5</text>
<text transform="translate(777.78,333.03) rotate(10) scale(1.0,1)" text-anchor="middle" font-family="Liberation Sans" font-size="28.5" fill="#ff0000" stroke="#ff0000" stroke-width="0.6">y</text>
<text transform="translate(806.11,342.23) rotate(26) scale(0.62,1)" text-anchor="middle" font-family="Liberation Sans" font-size="28.5" fill="#ff0000" stroke="#ff0000" stroke-width="1.3">m</text>
<text transform="translate(830.80,358.88) rotate(42) scale(1.0,1)" text-anchor="middle" font-family="Liberation Sans" font-size="28.5" fill="#ff0000" stroke="#ff0000" stroke-width="0.6">.</text>
<text transform="translate(849.94,381.70) rotate(58) scale(1.0,1)" text-anchor="middle" font-family="Liberation Sans" font-size="28.5" fill="#ff0000" stroke="#ff0000" stroke-width="0.6">c</text>
<text transform="translate(862.06,408.91) rotate(74) scale(1.0,1)" text-anchor="middle" font-family="Liberation Sans" font-size="28.5" fill="#ff0000" stroke="#ff0000" stroke-width="0.6">o</text>
<text transform="translate(866.20,438.40) rotate(90) scale(0.62,1)" text-anchor="middle" font-family="Liberation Sans" font-size="28.5" fill="#ff0000" stroke="#ff0000" stroke-width="1.3">m</text>
<text transform="translate(698.74,554.05) rotate(27.599999999999994)" text-anchor="middle" font-family="Liberation Sans" font-size="14.5" font-style="italic" fill="#ff0000">5</text>
<text transform="translate(712.43,560.23) rotate(21.0)" text-anchor="middle" font-family="Liberation Sans" font-size="14.5" font-style="italic" fill="#ff0000">1</text>
<text transform="translate(726.75,564.80) rotate(14.400000000000006)" text-anchor="middle" font-family="Liberation Sans" font-size="14.5" font-style="italic" fill="#ff0000">5</text>
<text transform="translate(741.49,567.69) rotate(7.800000000000011)" text-anchor="middle" font-family="Liberation Sans" font-size="14.5" font-style="italic" fill="#ff0000">y</text>
<text transform="translate(756.47,568.87) rotate(1.1999999999999886)" text-anchor="middle" font-family="Liberation Sans" font-size="14.5" font-style="italic" fill="#ff0000">m</text>
<text transform="translate(771.48,568.32) rotate(-5.399999999999977)" text-anchor="middle" font-family="Liberation Sans" font-size="14.5" font-style="italic" fill="#ff0000">.</text>
<text transform="translate(786.33,566.05) rotate(-12.0)" text-anchor="middle" font-family="Liberation Sans" font-size="14.5" font-style="italic" fill="#ff0000">c</text>
<text transform="translate(800.82,562.08) rotate(-18.600000000000023)" text-anchor="middle" font-family="Liberation Sans" font-size="14.5" font-style="italic" fill="#ff0000">o</text>
<text transform="translate(814.76,556.48) rotate(-25.19999999999999)" text-anchor="middle" font-family="Liberation Sans" font-size="14.5" font-style="italic" fill="#ff0000">m</text>
<text x="684.5" y="451.7" font-family="Liberation Sans" font-size="41.5" fill="#ff0000">515</text>
<text transform="translate(756,452.5) skewX(-8)" font-family="Liberation Sans" font-size="38" fill="#ff0000" stroke="#ff0000" stroke-width=".7">源码</text>
<text transform="translate(694.1,517) scale(0.95,1)" text-anchor="middle" font-family="Liberation Sans" font-size="26" font-weight="bold" fill="#ff0000">5</text>
<text transform="translate(710.1,517) scale(0.95,1)" text-anchor="middle" font-family="Liberation Sans" font-size="26" font-weight="bold" fill="#ff0000">1</text>
<text transform="translate(725.9,517) scale(0.95,1)" text-anchor="middle" font-family="Liberation Sans" font-size="26" font-weight="bold" fill="#ff0000">5</text>
<text transform="translate(742.3,517) scale(0.95,1)" text-anchor="middle" font-family="Liberation Sans" font-size="26" font-weight="bold" fill="#ff0000">y</text>
<text transform="translate(758.8,517) scale(0.75,1)" text-anchor="middle" font-family="Liberation Sans" font-size="26" font-weight="bold" fill="#ff0000">m</text>
<text transform="translate(773.8,517) scale(0.95,1)" text-anchor="middle" font-family="Liberation Sans" font-size="26" font-weight="bold" fill="#ff0000">.</text>
<text transform="translate(794.7,517) scale(0.95,1)" text-anchor="middle" font-family="Liberation Sans" font-size="26" font-weight="bold" fill="#ff0000">c</text>
<text transform="translate(810.7,517) scale(0.95,1)" text-anchor="middle" font-family="Liberation Sans" font-size="26" font-weight="bold" fill="#ff0000">o</text>
<text transform="translate(829.2,517) scale(0.75,1)" text-anchor="middle" font-family="Liberation Sans" font-size="26" font-weight="bold" fill="#ff0000">m</text>
</svg>
</body></html>
